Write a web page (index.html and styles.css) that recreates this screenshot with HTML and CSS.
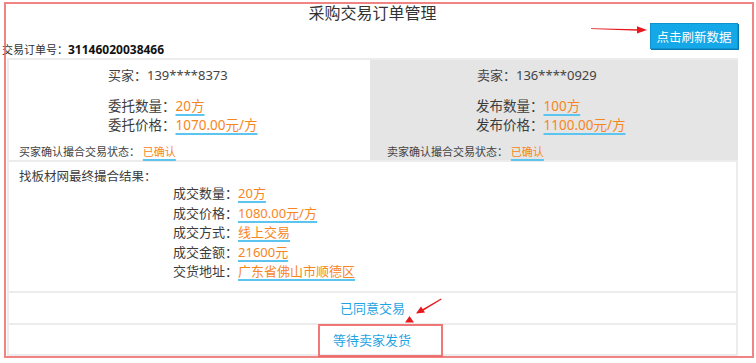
FILE: index.html
```html
<!DOCTYPE html>
<html lang="zh-CN">
<head>
    <meta charset="UTF-8">
    <meta name="viewport" content="width=device-width, initial-scale=1.0">
    <title>采购交易订单管理</title>
    <link rel="stylesheet" href="styles.css">
</head>
<body>
    <div class="page">
        <h1 class="title">采购交易订单管理</h1>

        <div class="toolbar">
            <div class="order-no">交易订单号：<b>31146020038466</b></div>
            <button class="refresh">点击刷新数据</button>
        </div>

        <div class="order">
            <div class="row parties">
                <div class="party buyer">
                    <div class="party-head">买家：139****8373</div>
                    <div class="party-lines">
                        <div>委托数量：<span class="val">20方</span></div>
                        <div>委托价格：<span class="val">1070.00元/方</span></div>
                    </div>
                    <div class="party-status">买家确认撮合交易状态： <span class="val">已确认</span></div>
                </div>
                <div class="party seller">
                    <div class="party-head">卖家：136****0929</div>
                    <div class="party-lines">
                        <div>发布数量：<span class="val">100方</span></div>
                        <div>发布价格：<span class="val">1100.00元/方</span></div>
                    </div>
                    <div class="party-status">卖家确认撮合交易状态： <span class="val">已确认</span></div>
                </div>
            </div>

            <div class="row result">
                <div class="result-head">找板材网最终撮合结果：</div>
                <div class="result-lines">
                    <div>成交数量：<span class="val">20方</span></div>
                    <div>成交价格：<span class="val">1080.00元/方</span></div>
                    <div>成交方式：<span class="val">线上交易</span></div>
                    <div>成交金额：<span class="val">21600元</span></div>
                    <div>交货地址：<span class="val">广东省佛山市顺德区</span></div>
                </div>
            </div>

            <div class="row agreed">已同意交易</div>

            <div class="row waiting">
                <span class="waiting-mark">等待卖家发货</span>
            </div>
        </div>
    </div>

    <!-- red annotation frame and arrows on top of the page -->
    <div class="frame"></div>
    <svg class="marks" width="756" height="363" viewBox="0 0 756 363">
        <path d="M591 28.2 L638 29.3 L638 30.7 L591 29 Z" fill="#e8191c"/>
        <path d="M637 26.2 L647 30 L637 33.6 Z" fill="#e8191c"/>
        <path d="M441 298.6 L422 309.6 L422.8 311 L441.6 299.6 Z" fill="#e8191c"/>
        <path d="M416 313.6 L421 306.6 L425 312.4 Z" fill="#e8191c"/>
        <path d="M405 322.5 L409.5 316 L414 322.5 Z" fill="#e8191c"/>
    </svg>
</body>
</html>
```

FILE: styles.css
```css
* {
    margin: 0;
    padding: 0;
    box-sizing: border-box;
}

body {
    width: 756px;
    height: 363px;
    overflow: hidden;
    background: #fff;
    color: #3c3c3c;
    font-family: "Noto Sans", "Noto Sans CJK TC", "Noto Sans CJK SC", sans-serif;
    font-size: 13px;
}

.page {
    width: 738px;
    padding: 4px 0 0 7px;
}

.title {
    font-size: 16px;
    font-weight: normal;
    line-height: 19px;
    text-align: center;
    color: #333;
}

.toolbar {
    height: 35px;
    display: flex;
    justify-content: space-between;
}

.order-no {
    align-self: flex-end;
    margin: 0 0 1px -5px;
    font-size: 11px;
    line-height: 14px;
    color: #333;
}

.order-no b {
    font-size: 12px;
    color: #111;
}

.refresh {
    align-self: flex-start;
    width: 88px;
    height: 26px;
    font-family: inherit;
    font-size: 12.5px;
    color: #fff;
    background: #14a8e8;
    border: 1px solid #0f93cf;
    box-shadow: 1px 1px 0 #0a78ad;
    cursor: pointer;
}

/* order table */
.order {
    width: 731px;
    border: 2px solid #ececec;
    border-top: none;
}

.row {
    border-top: 2px solid #ececec;
}

.parties {
    display: grid;
    grid-template-columns: 361px 1fr;
    height: 102px;
}

.party {
    padding-top: 5px;
}

.buyer { padding-left: 10px; }

.seller {
    padding-left: 17px;
    background: #e5e5e5;
    margin-right: -2px;
}

.party-head {
    line-height: 20px;
    color: #444;
}

.buyer .party-head,
.buyer .party-lines { margin-left: 89px; }

.seller .party-head { margin-left: 90px; }
.seller .party-lines { margin-left: 89px; }

.party-lines {
    margin-top: 12px;
    line-height: 19px;
    font-size: 13.5px;
}

.party-status {
    margin-top: 9px;
    font-size: 11px;
    line-height: 16px;
    color: #444;
}

.val {
    color: #f7861e;
    text-decoration: underline;
    text-decoration-color: #5bc5ef;
    text-decoration-thickness: 2px;
    text-underline-offset: 3px;
}

.result {
    padding: 8px 0 9px 10px;
    height: 131px;
}

.result-head {
    line-height: 14px;
    font-size: 12.5px;
}

.result-lines {
    margin-left: 154px;
    line-height: 19.5px;
}

.agreed {
    height: 32px;
    line-height: 30px;
    text-align: center;
    color: #1fa4e2;
}

.waiting {
    height: 31px;
    padding-left: 309px;
    display: flex;
    align-items: flex-start;
}

.waiting-mark {
    height: 33px;
    margin-top: -1px;
    padding: 0 30px 0 13px;
    line-height: 29px;
    font-size: 13px;
    color: #1fa4e2;
    border: 2px solid rgba(238, 96, 96, 0.85);
}

.frame {
    position: absolute;
    left: 4px;
    top: 2px;
    width: 750px;
    height: 356px;
    border: 2px solid rgba(238, 100, 100, 0.8);
    pointer-events: none;
}

.marks {
    position: absolute;
    left: 0;
    top: 0;
    pointer-events: none;
}
```
